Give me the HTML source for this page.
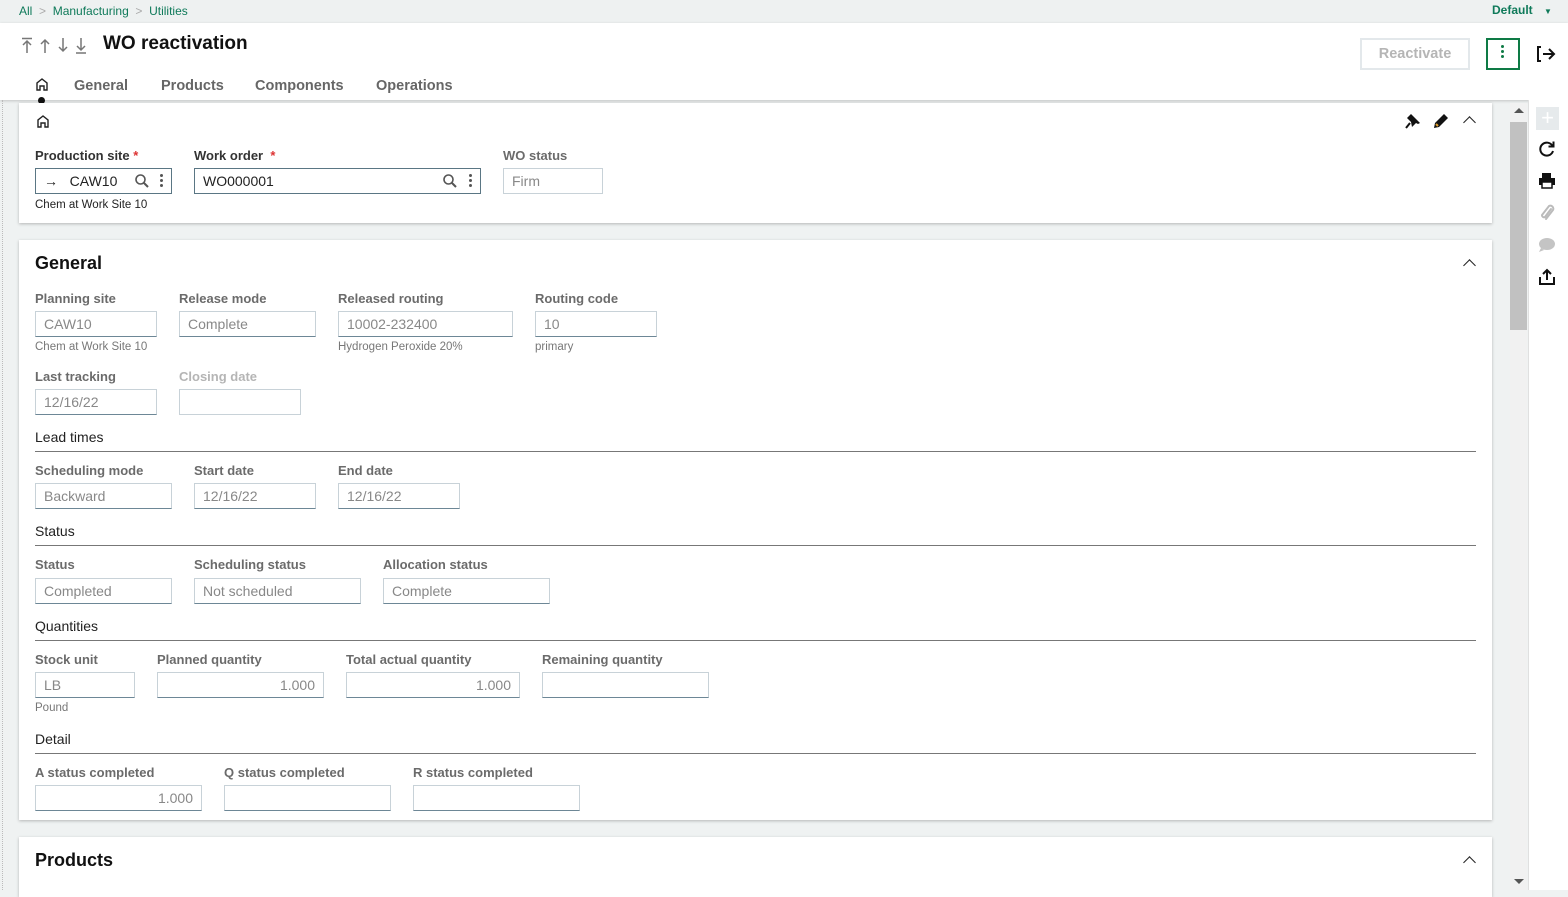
<!DOCTYPE html>
<html><head><meta charset="utf-8"><style>
*{box-sizing:border-box;margin:0;padding:0}
body{width:1568px;height:890px;overflow:hidden;background:#eff2f2;font-family:"Liberation Sans",sans-serif;position:relative;color:#222}
.a{position:absolute}
.crumb{font-size:12px;color:#0f7a5a}
.lbl{position:absolute;font-size:13px;font-weight:bold;color:#6b6b6b}
.in{position:absolute;height:26px;border:1px solid #c8d2d8;border-bottom-color:#6d8796;background:#fff;font-size:14px;color:#888;padding:4px 8px;line-height:16px}
.sub{position:absolute;font-size:11.5px;color:#777}
.sec{position:absolute;font-size:14px;color:#222;left:35px}
.hr{position:absolute;left:35px;width:1441px;height:1px;background:#777}
.panel{position:absolute;left:19px;width:1473px;background:#fff;box-shadow:0 1px 3px rgba(0,0,0,.25)}
.tab{position:absolute;top:78px;font-size:14.5px;font-weight:bold;color:#666}
.chev{position:absolute;width:9px;height:9px;border-left:1.6px solid #222;border-top:1.6px solid #222;transform:rotate(45deg)}
</style></head><body>
<div class="a" style="left:0;top:0;width:1568px;height:23px;background:#eef1f1"></div>
<div class="a crumb" style="left:19px;top:4px">All <span style="color:#aaa">&nbsp;&gt;&nbsp;</span> Manufacturing <span style="color:#aaa">&nbsp;&gt;&nbsp;</span> Utilities</div>
<div class="a" style="left:1492px;top:3px;font-size:12px;font-weight:bold;color:#0f7a5a">Default <span style="font-size:8px;margin-left:8px">▼</span></div>
<div class="a" style="left:0;top:23px;width:1568px;height:77px;background:#fff;box-shadow:0 1px 3px rgba(0,0,0,.2)"></div>
<svg class="a" style="left:20px;top:37px" width="70" height="17" viewBox="0 0 70 17" fill="none" stroke="#777" stroke-width="1.5">
<path d="M2 1.5h10M7 16V4M3 8l4-4 4 4"/>
<path d="M25 16V3M21 7l4-4 4 4"/>
<path d="M43 1v13M39 10l4 4 4-4"/>
<path d="M61 1v12M57 9l4 4 4-4M56 16h10"/>
</svg>
<div class="a" style="left:103px;top:33px;font-size:19px;font-weight:bold;color:#111">WO reactivation</div>
<div class="a" style="left:1360px;top:38px;width:110px;height:32px;border:2px solid #e3e8eb;color:#b5b5b5;font-size:14.5px;font-weight:bold;text-align:center;line-height:28px">Reactivate</div>
<div class="a" style="left:1486px;top:38px;width:34px;height:32px;border:2px solid #0e7a45"></div>
<div class="a" style="left:1501px;top:45px;width:3px;height:3px;background:#0e7a45;border-radius:50%;box-shadow:0 5px 0 #0e7a45,0 10px 0 #0e7a45"></div>
<svg class="a" style="left:1536px;top:45px" width="20" height="18" viewBox="0 0 20 18"><path d="M5 2H2v14h3M7 9h11M13 4l5 5-5 5" fill="none" stroke="#111" stroke-width="2"/></svg>
<svg class="a" style="left:35px;top:77px" width="14" height="14" viewBox="0 0 14 14"><path d="M2 13V6l5-4 5 4v7H9V9H5v4z" fill="none" stroke="#222" stroke-width="1.4"/></svg>
<div class="a" style="left:38px;top:97px;width:7px;height:7px;border-radius:50%;background:#111"></div>
<div class="tab" style="left:74px">General</div>
<div class="tab" style="left:161px">Products</div>
<div class="tab" style="left:255px">Components</div>
<div class="tab" style="left:376px">Operations</div>
<div class="a" style="left:2px;top:100px;width:1px;height:790px;border-left:1px dotted #bbb"></div>

<!-- panel 1 -->
<div class="panel" style="top:103px;height:120px"></div>
<svg class="a" style="left:36px;top:114px" width="14" height="14" viewBox="0 0 14 14"><path d="M2 13V6l5-4 5 4v7H9V9H5v4z" fill="none" stroke="#222" stroke-width="1.4"/></svg>
<svg class="a" style="left:1405px;top:113px" width="16" height="16" viewBox="0 0 16 16"><path d="M6 1l9 9-2 1-2-1-3 3-1 1-1-5-4-4z" fill="#111"/><path d="M5 10l-4 5" stroke="#111" stroke-width="2"/></svg>
<svg class="a" style="left:1433px;top:113px" width="16" height="16" viewBox="0 0 16 16"><path d="M11 1l4 4-9 9-5 1 1-5z" fill="#111"/><path d="M3 11l2 2" stroke="#e0a030" stroke-width="2"/></svg>
<div class="chev" style="left:1465px;top:118px"></div>
<div class="lbl" style="left:35px;top:148px;color:#333">Production site <span style="color:#d33">*</span></div>
<div class="lbl" style="left:194px;top:148px;color:#333">Work order <span style="color:#d33">&nbsp;*</span></div>
<div class="lbl" style="left:503px;top:148px">WO status</div>
<div class="in" style="left:35px;top:168px;width:137px;border-color:#5a7684;color:#222">→ &nbsp; CAW10</div>
<div class="in" style="left:194px;top:168px;width:287px;border-color:#5a7684;color:#222">WO000001</div>
<div class="a" style="left:160px;top:174px;width:3px;height:3px;background:#555;border-radius:50%;box-shadow:0 5px 0 #555,0 10px 0 #555"></div>
<div class="a" style="left:469px;top:174px;width:3px;height:3px;background:#555;border-radius:50%;box-shadow:0 5px 0 #555,0 10px 0 #555"></div>
<svg class="a" style="left:135px;top:174px" width="14" height="14"><circle cx="5.5" cy="5.5" r="4.5" fill="none" stroke="#555" stroke-width="1.6"/><path d="M9 9l4 4" stroke="#555" stroke-width="2"/></svg>
<svg class="a" style="left:443px;top:174px" width="14" height="14"><circle cx="5.5" cy="5.5" r="4.5" fill="none" stroke="#555" stroke-width="1.6"/><path d="M9 9l4 4" stroke="#555" stroke-width="2"/></svg>
<div class="in" style="left:503px;top:168px;width:100px;border-bottom-color:#c8d2d8">Firm</div>
<div class="sub" style="left:35px;top:199px;color:#222">Chem at Work Site 10</div>

<!-- panel 2 -->
<div class="panel" style="top:240px;height:580px"></div>
<div class="a" style="left:35px;top:253px;font-size:18px;font-weight:bold;color:#111">General</div>
<div class="chev" style="left:1465px;top:261px"></div>
<div class="lbl" style="left:35px;top:291px">Planning site</div>
<div class="lbl" style="left:179px;top:291px">Release mode</div>
<div class="lbl" style="left:338px;top:291px">Released routing</div>
<div class="lbl" style="left:535px;top:291px">Routing code</div>
<div class="in" style="left:35px;top:311px;width:122px">CAW10</div>
<div class="in" style="left:179px;top:311px;width:137px">Complete</div>
<div class="in" style="left:338px;top:311px;width:175px">10002-232400</div>
<div class="in" style="left:535px;top:311px;width:122px">10</div>
<div class="sub" style="left:35px;top:341px">Chem at Work Site 10</div>
<div class="sub" style="left:338px;top:341px">Hydrogen Peroxide 20%</div>
<div class="sub" style="left:535px;top:341px">primary</div>
<div class="lbl" style="left:35px;top:369px">Last tracking</div>
<div class="lbl" style="left:179px;top:369px;color:#b5b5b5">Closing date</div>
<div class="in" style="left:35px;top:389px;width:122px">12/16/22</div>
<div class="in" style="left:179px;top:389px;width:122px;border-bottom-color:#c8d2d8"></div>
<div class="sec" style="top:429px">Lead times</div><div class="hr" style="top:451px"></div>
<div class="lbl" style="left:35px;top:463px">Scheduling mode</div>
<div class="lbl" style="left:194px;top:463px">Start date</div>
<div class="lbl" style="left:338px;top:463px">End date</div>
<div class="in" style="left:35px;top:483px;width:137px">Backward</div>
<div class="in" style="left:194px;top:483px;width:122px">12/16/22</div>
<div class="in" style="left:338px;top:483px;width:122px">12/16/22</div>
<div class="sec" style="top:523px">Status</div><div class="hr" style="top:545px"></div>
<div class="lbl" style="left:35px;top:557px">Status</div>
<div class="lbl" style="left:194px;top:557px">Scheduling status</div>
<div class="lbl" style="left:383px;top:557px">Allocation status</div>
<div class="in" style="left:35px;top:578px;width:137px">Completed</div>
<div class="in" style="left:194px;top:578px;width:167px">Not scheduled</div>
<div class="in" style="left:383px;top:578px;width:167px">Complete</div>
<div class="sec" style="top:618px">Quantities</div><div class="hr" style="top:640px"></div>
<div class="lbl" style="left:35px;top:652px">Stock unit</div>
<div class="lbl" style="left:157px;top:652px">Planned quantity</div>
<div class="lbl" style="left:346px;top:652px">Total actual quantity</div>
<div class="lbl" style="left:542px;top:652px">Remaining quantity</div>
<div class="in" style="left:35px;top:672px;width:100px">LB</div>
<div class="in" style="left:157px;top:672px;width:167px;text-align:right">1.000</div>
<div class="in" style="left:346px;top:672px;width:174px;text-align:right">1.000</div>
<div class="in" style="left:542px;top:672px;width:167px"></div>
<div class="sub" style="left:35px;top:702px">Pound</div>
<div class="sec" style="top:731px">Detail</div><div class="hr" style="top:753px"></div>
<div class="lbl" style="left:35px;top:765px">A status completed</div>
<div class="lbl" style="left:224px;top:765px">Q status completed</div>
<div class="lbl" style="left:413px;top:765px">R status completed</div>
<div class="in" style="left:35px;top:785px;width:167px;text-align:right">1.000</div>
<div class="in" style="left:224px;top:785px;width:167px"></div>
<div class="in" style="left:413px;top:785px;width:167px"></div>

<!-- panel 3 -->
<div class="panel" style="top:837px;height:60px"></div>
<div class="a" style="left:35px;top:850px;font-size:18px;font-weight:bold;color:#111">Products</div>
<div class="chev" style="left:1465px;top:858px"></div>

<!-- scrollbar -->
<div class="a" style="left:1510px;top:103px;width:17px;height:787px;background:#f1f1f1"></div>
<div class="a" style="left:1510px;top:122px;width:17px;height:208px;background:#c1c1c1"></div>
<div class="a" style="left:1514px;top:108px;border:5px solid transparent;border-bottom:5px solid #555;border-top:0"></div>
<div class="a" style="left:1514px;top:879px;border:5px solid transparent;border-top:5px solid #555;border-bottom:0"></div>
<!-- right sidebar -->
<div class="a" style="left:1528px;top:100px;width:40px;height:790px;background:#fff;border-left:1px solid #e0e0e0"></div>
<div class="a" style="left:1536px;top:107px;width:23px;height:23px;background:#e6eaec;color:#fff;font-size:22px;line-height:22px;text-align:center">+</div>
<svg class="a" style="left:1538px;top:140px" width="18" height="18" viewBox="0 0 18 18"><path d="M14.5 6A6.5 6.5 0 1 0 15 11" fill="none" stroke="#111" stroke-width="2"/><path d="M15.5 1.5v5h-5" fill="none" stroke="#111" stroke-width="2"/></svg>
<svg class="a" style="left:1539px;top:172px" width="16" height="17"><rect x="3" y="1" width="9" height="5" fill="#111"/><rect x="0" y="6" width="16" height="7" fill="#111"/><rect x="3" y="10" width="10" height="6" fill="#fff" stroke="#111" stroke-width="1.5"/></svg>
<svg class="a" style="left:1539px;top:204px" width="16" height="18" viewBox="0 0 16 18"><path d="M12 5l-6 8a2 2 0 0 1-3-2l7-9a3 3 0 0 1 4 4l-7 9" fill="none" stroke="#bbb" stroke-width="2" stroke-linecap="round"/></svg>
<svg class="a" style="left:1538px;top:237px" width="18" height="15"><ellipse cx="9" cy="7" rx="8" ry="6" fill="#c4c4c4"/><path d="M3 11l-2 4 5-2z" fill="#c4c4c4"/></svg>
<svg class="a" style="left:1539px;top:268px" width="16" height="18"><path d="M1 9v7h14V9M8 12V2M4 6l4-4 4 4" fill="none" stroke="#111" stroke-width="2"/></svg>
</body></html>
